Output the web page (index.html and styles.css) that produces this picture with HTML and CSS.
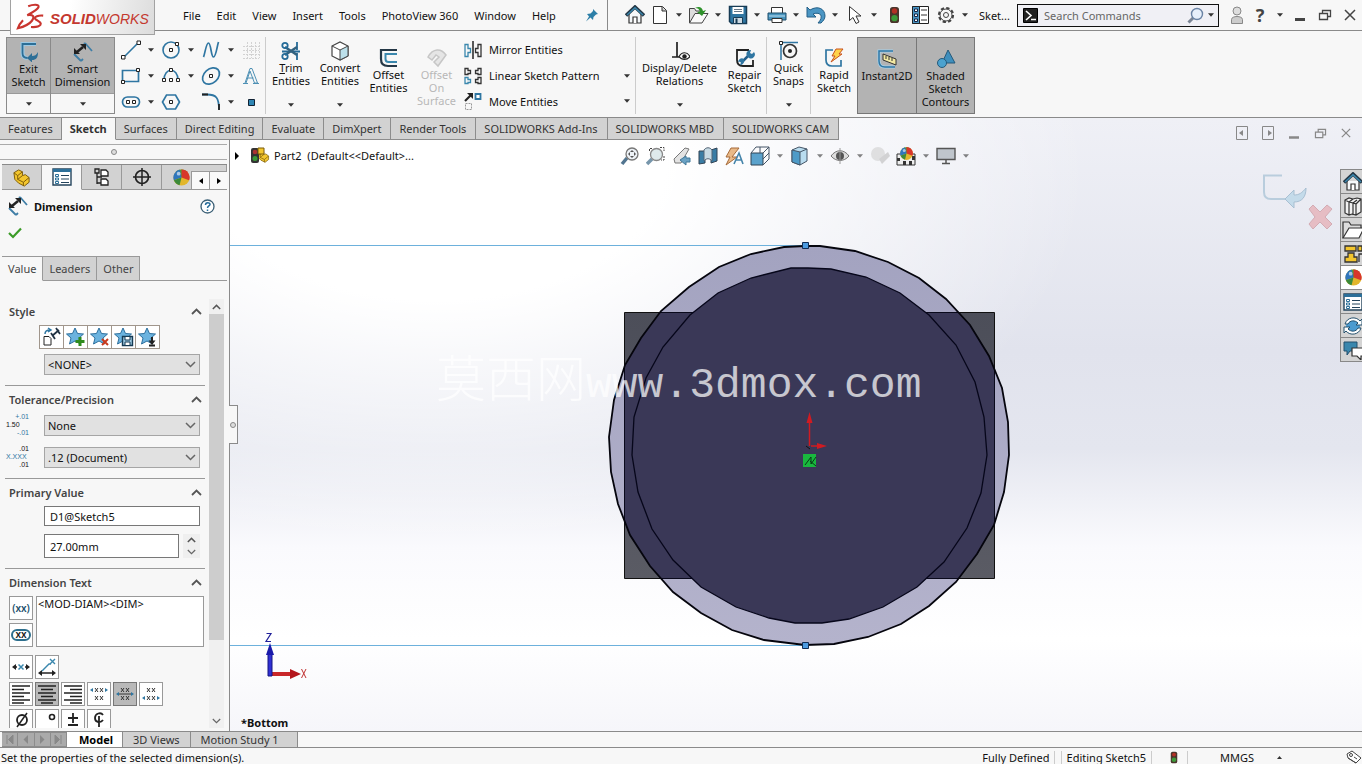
FILE: index.html
```html
<!DOCTYPE html>
<html lang="en">
<head>
<meta charset="utf-8">
<title>SOLIDWORKS</title>
<link rel="stylesheet" href="styles.css">
</head>
<body>
<svg class="sprite" aria-hidden="true">
  <symbol id="caret" viewBox="0 0 7 4"><path d="M0 0h7L3.500 4z" fill="#333"/></symbol>
  <symbol id="up" viewBox="0 0 11 7"><path d="M1 6l4.500-4.500L10 6" fill="none" stroke="#555" stroke-width="1.800"/></symbol>
  <symbol id="down" viewBox="0 0 11 7"><path d="M1 1l4.500 4.500L10 1" fill="none" stroke="#666" stroke-width="1.500"/></symbol>
  <symbol id="dim" viewBox="0 0 20 20"><path d="M1 12l7 7M8 19l2-2M12 1l7 8M12 1l-1 1" fill="none" stroke="#3f7ea6" stroke-width="1.800"/><path d="M4 10l6-5" stroke="#222" stroke-width="2.500"/><path d="M1 12V6l6 6zM13 2v6L7 2z" fill="#222"/></symbol>
  <symbol id="star" viewBox="0 0 20 20"><path d="M9 1l2.500 5.500 6 .5-4.500 4 1.500 6L9 14l-5.500 3L5 11 .5 7l6-.5z" fill="#6bb3df" stroke="#2d6f9d"/></symbol>
  <symbol id="house" viewBox="0 0 20 20"><path d="M4 9v9h12V9" fill="#f5f8fa" stroke="#333" stroke-width="1.200"/><path d="M1 10.500L10 2l9 8.500" fill="none" stroke="#243746" stroke-width="3.500"/><path d="M2 10L10 2.800 18 10" fill="none" stroke="#3a87ad" stroke-width="1.400"/><path d="M8 18v-6h4v6" fill="#fff" stroke="#333" stroke-width="1.200"/></symbol>
  <symbol id="list" viewBox="0 0 20 20"><path d="M1 2h18v16H1z" fill="#fff" stroke="#24445c" stroke-width="1.400"/><path d="M1 2h18v3H1z" fill="#2d7099"/><path d="M9 8.500h8M9 12h8M9 15.500h8" stroke="#24445c"/><path d="M3.500 7.500h3v2h-3zM3.500 11h3v2h-3zM3.500 14.500h3v2h-3z" fill="#fff" stroke="#2d7099"/></symbol>
  <symbol id="ball" viewBox="0 0 20 20"><circle cx="10" cy="10" r="8.500" fill="#e2b62b"/><path d="M10 10L4 4A8.500 8.500 0 0 1 16 4z" fill="#4f9b39"/><path d="M10 10V1.500A8.500 8.500 0 0 1 18 13z" fill="#d8362b"/><path d="M10 10L2 13A8.500 8.500 0 0 1 8 1.700z" fill="#2f76bd"/><path d="M10 10l-8 3a8.500 8.500 0 0 0 6 5.200z" fill="#3b8a3a"/><circle cx="7" cy="6" r="2" fill="#fff" opacity=".6"/></symbol>
  <symbol id="restore" viewBox="0 0 14 12"><path d="M4.500 4.500v-3h8v6h-3M1.500 4.500h8v6h-8z" fill="none" stroke="currentColor" stroke-width="1.300"/></symbol>
  <symbol id="close" viewBox="0 0 12 12"><path d="M1 1l10 10M11 1L1 11" stroke="currentColor" stroke-width="1.500"/></symbol>
  <symbol id="light" viewBox="0 0 12 20"><rect x="1" y="1" width="10" height="18" rx="3" fill="#4a352b"/><circle cx="6" cy="5.500" r="3" fill="#b43025"/><circle cx="6" cy="13.500" r="3.500" fill="#3d9a39"/></symbol>
  <symbol id="part" viewBox="0 0 20 20"><path d="M2 5l5-3 4 2v4l3-1 4 3v5l-5 4-6-3-4-4z" fill="#f3c62e" stroke="#7b5b08"/><path d="M2 5l4 3 5-4M6 8v4l6 3 6-5M12 15v4M6 12l5-4" fill="none" stroke="#7b5b08"/></symbol>
</svg>

<header class="titlebar">
  <div class="logo">
    <svg class="mark" viewBox="14 0 32 30"><path d="M27 3.500c5-2 12-2.500 11 1-1 3-7 6-12 8.500 7-1 8 2 5 6-3 4-9 6.500-15 8 1-3 3-6 5.500-8.500" fill="none" stroke="#c9352f" stroke-width="2.300"/><path d="M43 13.500c-5-.5-10 1-8.500 3.500C36 19 42 20.500 40 23.500c-1.500 2-5 2.500-10 2.200" fill="none" stroke="#c9352f" stroke-width="2.300"/></svg>
    <span class="wordmark"><b>SOLID</b>WORKS</span>
  </div>
  <div class="menuside">
    <nav class="menus"><button>File</button><button>Edit</button><button>View</button><button>Insert</button><button>Tools</button><button>PhotoView 360</button><button>Window</button><button>Help</button></nav>
    <button class="pin" aria-label="Pin menu"><svg width="14" height="14" viewBox="0 0 14 14"><path d="M8 1l5 5-2 .5-2.500 2.500-.5 3L5.500 9.500 1 13.500 4 8.500 2 6l3.500-.5L8 3z" fill="#2d7fa8"/></svg></button>
  </div>
  <div class="quick">
    <button class="q" aria-label="Home"><svg width="20" height="20"><use href="#house"/></svg></button>
    <button class="q" aria-label="New"><svg width="16" height="20" viewBox="0 0 16 20"><path d="M1.500 1.500h9l4 4v13h-13z" fill="#fff" stroke="#333"/><path d="M10 2v4h4" fill="#ccc" stroke="#333"/></svg></button><button class="c" aria-label="New options"><svg><use href="#caret"/></svg></button>
    <button class="q" aria-label="Open"><svg width="21" height="20" viewBox="0 0 21 20"><path d="M1.500 18V3.500h5L8 6h6v3" fill="#ddd" stroke="#444"/><path d="M1.500 18L7 8.500h13L14 18z" fill="#fafafa" stroke="#444"/><path d="M7 3c4-2 7-1 8 3l3-1-4 6-5-4 3-.5C11 4 10 3 7 3z" fill="#2f922b"/></svg></button><button class="c" aria-label="Open options"><svg><use href="#caret"/></svg></button>
    <button class="q" aria-label="Save"><svg width="20" height="20" viewBox="0 0 20 20"><path d="M1.500 1.500h17v17h-15l-2-2z" fill="#2f76a2" stroke="#173b54" stroke-width="1.500"/><path d="M4.500 2h11v7h-11z" fill="#fff"/><path d="M6 4.500h8M6 6.500h8" stroke="#678"/><path d="M5.500 12.500h9v6h-9z" fill="#ccd9e2" stroke="#173b54"/><path d="M7.500 13.500h2v5h-2z" fill="#173b54"/></svg></button><button class="c" aria-label="Save options"><svg><use href="#caret"/></svg></button>
    <button class="q" aria-label="Print"><svg width="20" height="20" viewBox="0 0 20 20"><path d="M4.500 8V2.500h11V8" fill="#fff" stroke="#333"/><path d="M1 8h18v7H1z" fill="#4b96bf" stroke="#1c4c6a"/><path d="M2 11h16" stroke="#bfe0f2"/><path d="M5 13.500h10v4H5z" fill="#fff" stroke="#333"/></svg></button><button class="c" aria-label="Print options"><svg><use href="#caret"/></svg></button>
    <button class="q" aria-label="Undo"><svg width="20" height="18" viewBox="0 0 20 18"><path d="M1 1l3 3c8-5 15-1 15 6 0 3-2 5-4 7h-3c6-6 3-12-5-9l3 3H1z" fill="#4b96c4" stroke="#245f86"/></svg></button><button class="c" aria-label="Undo options"><svg><use href="#caret"/></svg></button>
    <button class="q" aria-label="Select"><svg width="14" height="20" viewBox="0 0 14 20"><path d="M1.500 1.500v14l3.500-3 3 6 3-1.500-3-6h5z" fill="#fff" stroke="#333"/></svg></button><button class="c" aria-label="Select options"><svg><use href="#caret"/></svg></button>
    <button class="q wide" aria-label="Rebuild"><svg width="11" height="18"><use href="#light"/></svg></button>
    <button class="q wide" aria-label="File properties"><svg width="17" height="18" viewBox="0 0 17 18"><path d="M.5.500h16v17H.5z" fill="#fff" stroke="#222"/><path d="M.5.500h7v17h-7z" fill="#4b96c4" stroke="#222"/><path d="M2.500 3h3v2.500h-3zM2.500 8h3v2.500h-3zM2.500 13h3v2.500h-3z" fill="#fff" stroke="#124"/><path d="M9 4h6M9 9h6M9 14h6" stroke="#333"/></svg></button>
    <button class="q" aria-label="Options"><svg width="18" height="18" viewBox="0 0 18 18"><circle cx="9" cy="9" r="7" fill="none" stroke="#444" stroke-width="2.200" stroke-dasharray="3.300 2.200"/><circle cx="9" cy="9" r="6" fill="#f7f7f7" stroke="#444"/><circle cx="9" cy="9" r="2.500" fill="none" stroke="#444"/></svg></button><button class="c" aria-label="Options menu"><svg><use href="#caret"/></svg></button>
    <span class="doc">Sket...</span>
  </div>
  <div class="search">
    <svg width="15" height="15" viewBox="0 0 15 15"><path d="M.5.500h14v14H.5z" fill="#222" stroke="#000"/><path d="M3 3l5 4.500L3 12M8 11.500h5" fill="none" stroke="#fff" stroke-width="1.600"/></svg>
    <input type="text" placeholder="Search Commands" aria-label="Search Commands">
    <svg width="17" height="17" viewBox="0 0 17 17"><path d="M7 10l-5.500 5.500" stroke="#7a8494" stroke-width="3"/><circle cx="10" cy="7" r="5.500" fill="#e7effa" stroke="#6a83a4" stroke-width="1.400"/></svg>
    <button class="c" aria-label="Search options"><svg><use href="#caret"/></svg></button>
  </div>
  <div class="winctl">
    <button class="w1" aria-label="Account"><svg width="14" height="19" viewBox="0 0 14 19"><path d="M1.500 17.500v-4c0-4 11-4 11 0v4z" fill="#ccc" stroke="#888"/><circle cx="7" cy="5" r="4" fill="#ddd" stroke="#888"/></svg></button>
    <button class="help">?</button><button class="c" aria-label="Help options"><svg><use href="#caret"/></svg></button>
    <button class="w2" aria-label="Minimize"><svg width="10" height="12" viewBox="0 0 10 12"><path d="M0 10.500h10" stroke="currentColor" stroke-width="3"/></svg></button>
    <button class="w2" aria-label="Restore"><svg width="14" height="12"><use href="#restore"/></svg></button>
    <button class="w2" aria-label="Close"><svg width="12" height="12"><use href="#close"/></svg></button>
  </div>
</header>

<section class="ribbon">
  <div class="split on exit"><button><svg width="20" height="20" viewBox="0 0 20 20"><path d="M17 2H3.500v9c0 4 2 5 5 5" fill="none" stroke="#9cc9e4" stroke-width="4"/><path d="M17 2H3.500v9c0 4 2 5 5 5" fill="none" stroke="#2d6f97" stroke-width="1.800"/><path d="M8 16l5-5v3c3 0 4-1 6-4 0 6-2 8-6 8v2.500z" fill="#2d6f97"/></svg><span>Exit<br>Sketch</span></button><button class="drop" aria-label="Exit Sketch options"><svg><use href="#caret"/></svg></button></div>
  <div class="split on smart"><button><svg width="20" height="20"><use href="#dim"/></svg><span>Smart<br>Dimension</span></button><button class="drop" aria-label="Dimension options"><svg><use href="#caret"/></svg></button></div>
  <div class="sketchtools">
    <button class="s" aria-label="Line"><svg width="20" height="20" viewBox="0 0 20 20"><path d="M3 17L17 3" stroke="#2f76a2" stroke-width="1.600"/><path d="M.5 15.500h3.500V19H.500zM16 1h3.500v3.500H16z" fill="#fff" stroke="#222"/></svg></button><button class="c" aria-label="Line options"><svg><use href="#caret"/></svg></button>
    <button class="s" aria-label="Circle"><svg width="20" height="20" viewBox="0 0 20 20"><circle cx="10" cy="10" r="8" fill="none" stroke="#2f76a2" stroke-width="1.600"/><path d="M8.500 8.500h3v3h-3zM14.500 2.500h3v3h-3z" fill="#fff" stroke="#222"/></svg></button><button class="c" aria-label="Circle options"><svg><use href="#caret"/></svg></button>
    <button class="s" aria-label="Spline"><svg width="20" height="20" viewBox="0 0 20 20"><path d="M2.500 17C4 14 5 3 7.500 3S10 17 12.500 17 16 6 17.500 2" fill="none" stroke="#2f76a2" stroke-width="1.700"/></svg></button><button class="c" aria-label="Spline options"><svg><use href="#caret"/></svg></button>
    <button class="s" aria-label="Sketch grid"><svg width="18" height="18" viewBox="0 0 18 18"><path d="M5.500 1v16M9.500 1v16M13.500 1v16M17.500 1v16M1 5.500h16M1 9.500h16M1 13.500h16M1 17.500h16" stroke="#d2d2d2" stroke-dasharray="2 1"/></svg></button>
    <button class="s" aria-label="Rectangle"><svg width="20" height="20" viewBox="0 0 20 20"><path d="M1.500 4.500h16v11h-16z" fill="none" stroke="#2f76a2" stroke-width="1.700"/><path d="M.5 14.500h3v3h-3zM15.500 2.500h3v3h-3z" fill="#fff" stroke="#222"/></svg></button><button class="c" aria-label="Rectangle options"><svg><use href="#caret"/></svg></button>
    <button class="s" aria-label="Arc"><svg width="20" height="20" viewBox="0 0 20 20"><path d="M3 14C3 1 17 1 17 14" fill="none" stroke="#2f76a2" stroke-width="1.600"/><path d="M1.500 12.500h3v3h-3zM15.500 12.500h3v3h-3zM8.500 2.500h3v3h-3zM8.500 12.500h3v3h-3z" fill="#fff" stroke="#222"/></svg></button><button class="c" aria-label="Arc options"><svg><use href="#caret"/></svg></button>
    <button class="s" aria-label="Ellipse"><svg width="20" height="20" viewBox="0 0 20 20"><ellipse cx="10" cy="10" rx="9.500" ry="7" transform="rotate(-42 10 10)" fill="none" stroke="#2f76a2" stroke-width="1.700"/><path d="M8.500 8.500h3v3h-3z" fill="#fff" stroke="#222"/></svg></button><button class="c" aria-label="Ellipse options"><svg><use href="#caret"/></svg></button>
    <button class="s" aria-label="Text"><svg width="18" height="18" viewBox="0 0 18 18"><path d="M1 16.500h5M11 16.500h6M3 16L8 1.500h2L15.500 16h-3L8 4 4 16M5.500 11h6" fill="none" stroke="#4f91b5"/></svg></button>
    <button class="s" aria-label="Slot"><svg width="20" height="20" viewBox="0 0 20 20"><rect x="1.500" y="5" width="17" height="10" rx="5" fill="none" stroke="#2f76a2" stroke-width="1.700"/><path d="M5.500 8.500h3v3h-3zM11.500 8.500h3v3h-3z" fill="#fff" stroke="#222"/></svg></button><button class="c" aria-label="Slot options"><svg><use href="#caret"/></svg></button>
    <button class="s" aria-label="Polygon"><svg width="20" height="20" viewBox="0 0 20 20"><path d="M5.500 3h9l4 7-4 7h-9l-4-7z" fill="none" stroke="#2f76a2" stroke-width="1.700"/><path d="M8.500 8.500h3v3h-3z" fill="#fff" stroke="#222"/></svg></button><span></span>
    <button class="s" aria-label="Fillet"><svg width="20" height="20" viewBox="0 0 20 20"><path d="M1 2.500h5c9 0 12 3 12 15" fill="none" stroke="#2f76a2" stroke-width="1.800"/><path d="M1 2.500h6M18 12v6" stroke="#222" stroke-width="1.800"/></svg></button><button class="c" aria-label="Fillet options"><svg><use href="#caret"/></svg></button>
    <button class="s" aria-label="Point"><svg width="7" height="7" viewBox="0 0 7 7"><path d="M.5.500h6v6h-6z" fill="#2f86b4" stroke="#123"/></svg></button>
  </div>
  <div class="tool trim"><button><svg width="20" height="20" viewBox="0 0 20 20"><path d="M1 10.500h18M16 1v8M16 12v7" stroke="#256b98" stroke-width="1.800"/><path d="M4 6l12 8M4 14l12-8" stroke="#33627f" stroke-width="2.500"/><circle cx="4" cy="4.500" r="2.700" fill="none" stroke="#256b98" stroke-width="1.800"/><circle cx="4" cy="15.500" r="2.700" fill="none" stroke="#256b98" stroke-width="1.800"/></svg><span><u>T</u>rim<br>Entities</span></button><button class="drop" aria-label="Trim options"><svg><use href="#caret"/></svg></button></div>
  <div class="tool conv"><button><svg width="20" height="20" viewBox="0 0 20 20"><path d="M2 5l8-4 8 4v10l-8 4-8-4z" fill="#fff" stroke="#444" stroke-width="1.200"/><path d="M10 9l8-4v10l-8 4z" fill="#bce0ea" stroke="#444"/><path d="M2 5l8 4" stroke="#444"/></svg><span>Convert<br>Entities</span></button><button class="drop" aria-label="Convert options"><svg><use href="#caret"/></svg></button></div>
  <div class="tool low offs"><button><svg width="20" height="20" viewBox="0 0 20 20"><path d="M18 2H2v9c0 5 2 7 7 7h9" fill="none" stroke="#243746" stroke-width="2.200"/><path d="M18 6H6.500v5c0 2 1 3 3 3H18" fill="none" stroke="#3a87ad" stroke-width="2"/></svg><span>Offset<br>Entities</span></button></div>
  <div class="tool low surf"><button disabled><svg width="20" height="20" viewBox="0 0 20 20"><path d="M1 9c5-9 13-9 18-2l-8 11-4-4 5-5-3-2-4 5z" fill="#e5e5e5" stroke="#c6c6c6" stroke-width="1.500"/></svg><span>Offset<br>On<br>Surface</span></button></div>
  <div class="rows">
    <div class="row"><button><svg width="18" height="18" viewBox="0 0 18 18"><path d="M9 0v18" stroke="#222" stroke-width="1.500"/><path d="M1 3.500h3v4h2.500v4H4v4H1z" fill="none" stroke="#3a87ad" stroke-width="1.300"/><path d="M17 3.500h-3v4h-2.500v4H14v4h3z" fill="none" stroke="#333" stroke-width="1.300"/></svg>Mirror Entities</button></div>
    <div class="row"><button><svg width="18" height="18" viewBox="0 0 18 18"><path d="M1 1.500h3v2h2.500v3H4v1H1zM17 1.500h-3v2h-2.500v3H14v1h3zM17 10.500h-3v2h-2.500v3H14v1h3z" fill="none" stroke="#333" stroke-width="1.300"/><path d="M1 10.500h3v2h2.500v3H4v1H1z" fill="none" stroke="#3a87ad" stroke-width="1.300"/></svg>Linear Sketch Pattern</button><button class="c" aria-label="Pattern options"><svg><use href="#caret"/></svg></button></div>
    <div class="row"><button><svg width="18" height="18" viewBox="0 0 18 18"><path d="M1 9l6-6" stroke="#222" stroke-width="2.200"/><path d="M3 1h6v6z" fill="#222"/><path d="M11.500 2h5v5h-5z" fill="#fff" stroke="#2f76a2" stroke-width="1.800"/><path d="M1.500 11.500h6v6h-6z" fill="none" stroke="#999" stroke-dasharray="2 1"/></svg>Move Entities</button><button class="c" aria-label="Move options"><svg><use href="#caret"/></svg></button></div>
  </div>
  <div class="tool disp"><button><svg width="20" height="20" viewBox="0 0 20 20"><path d="M7 1v15M2 16h8" stroke="#222" stroke-width="1.700"/><path d="M9 15.500c3-5 8-5 11 0-3 4-8 4-11 0z" fill="#f7f7f7" stroke="#222" stroke-width="1.200"/><circle cx="14.500" cy="15.500" r="2.200" fill="#222"/></svg><span>Display/Delete<br>Relations</span></button><button class="drop" aria-label="Relations options"><svg><use href="#caret"/></svg></button></div>
  <div class="tool low repair"><button><svg width="20" height="20" viewBox="0 0 20 20"><path d="M14 2H2v10c0 4 2 6 6 6h10v-6" fill="none" stroke="#222" stroke-width="1.800"/><path d="M7 14l7-7" stroke="#225f8c" stroke-width="2.500"/><path d="M12 8a4 4 0 0 1 4-6l-1 3 2 1 2-2a4 4 0 0 1-5 6zM9 12a4 4 0 0 1-4 5l1-2.500-2-1-1 1a4 4 0 0 1 5-4z" fill="#2f76a2"/></svg><span>Repair<br>Sketch</span></button></div>
  <div class="tool snaps"><button><svg width="20" height="20" viewBox="0 0 20 20"><path d="M1 1.500h18M2 1v18" stroke="#2f76a2" stroke-width="1.500"/><path d="M.5.500h3v3h-3z" fill="#fff" stroke="#222"/><circle cx="11" cy="10" r="6.500" fill="none" stroke="#333" stroke-width="1.700"/><circle cx="11" cy="10" r="2" fill="#222"/></svg><span>Quick<br>Snaps</span></button><button class="drop" aria-label="Snap options"><svg><use href="#caret"/></svg></button></div>
  <div class="tool low rapid"><button><svg width="20" height="20" viewBox="0 0 20 20"><path d="M9 2H2v10c0 4 2 6 6 6h9v-6" fill="none" stroke="#2f76a2" stroke-width="1.700"/><path d="M12 1h7l-4 5h3L7 14l4-6H8z" fill="#ffd34a" stroke="#c8501c"/></svg><span>Rapid<br>Sketch</span></button></div>
  <div class="tool low on inst"><button><svg width="20" height="20" viewBox="0 0 20 20"><path d="M16 2H2v10c0 4 2 6 6 6h10" fill="none" stroke="#a6d2ec" stroke-width="3"/><path d="M16 2H2v10c0 4 2 6 6 6h10" fill="none" stroke="#2f76a2" stroke-width="1.500"/><path d="M6 5l13 5v6L6 11z" fill="#f3e9a2" stroke="#333"/><path d="M9 7v3M12 8v3M15 9v3" stroke="#333"/></svg><span>Instant2D</span></button></div>
  <div class="tool low on shade"><button><svg width="20" height="20" viewBox="0 0 20 20"><path d="M12 1l7 13H6z" fill="#3f8fbd" stroke="#25597a"/><circle cx="6" cy="14" r="4.500" fill="#4ba2cf" stroke="#25597a"/></svg><span>Shaded<br>Sketch<br>Contours</span></button></div>
</section>

<main class="work">
  <div class="tabline">
    <nav class="cmdtabs"><button>Features</button><button class="active">Sketch</button><button>Surfaces</button><button>Direct Editing</button><button>Evaluate</button><button>DimXpert</button><button>Render Tools</button><button>SOLIDWORKS Add-Ins</button><button>SOLIDWORKS MBD</button><button>SOLIDWORKS CAM</button></nav>
    <div class="docctl">
      <button aria-label="Pane left"><svg width="12" height="14" viewBox="0 0 12 14"><path d="M.5.500h11v13H.5z" fill="none" stroke="currentColor"/><path d="M7 4v6L3 7z" fill="currentColor"/></svg></button>
      <button aria-label="Pane right"><svg width="12" height="14" viewBox="0 0 12 14"><path d="M.5.500h11v13H.5z" fill="none" stroke="currentColor"/><path d="M6 4v6l4-3z" fill="currentColor"/></svg></button>
      <button aria-label="Minimize document"><svg width="10" height="12" viewBox="0 0 10 12"><path d="M0 10.500h10" stroke="currentColor" stroke-width="2.500"/></svg></button>
      <button aria-label="Restore document"><svg width="13" height="11"><use href="#restore"/></svg></button>
      <button aria-label="Close document"><svg width="10" height="10"><use href="#close"/></svg></button>
    </div>
  </div>
  <div class="split-area">
    <aside class="panel">
      <div class="grip"><i></i></div>
      <nav class="icontabs">
        <button aria-label="Feature tree"><svg width="19" height="19"><use href="#part"/></svg></button>
        <button class="active" aria-label="Properties"><svg width="20" height="20"><use href="#list"/></svg></button>
        <button aria-label="Configurations"><svg width="18" height="20" viewBox="0 0 18 20"><path d="M2 2h4v4H2zM4 6v11M4 10h5M4 16h5" fill="none" stroke="#222" stroke-width="1.300"/><path d="M8 3h5l2 2v4H8zM8 12h5l2 2v4H8z" fill="#fff" stroke="#222" stroke-width="1.300"/></svg></button>
        <button aria-label="DimXpert manager"><svg width="20" height="20" viewBox="0 0 20 20"><circle cx="10" cy="10" r="6.500" fill="none" stroke="#222" stroke-width="1.700"/><path d="M10 1v18M1 10h18" stroke="#222" stroke-width="1.500"/></svg></button>
        <button class="last" aria-label="Display manager"><svg width="19" height="19"><use href="#ball"/></svg></button>
        <span class="tabscroll"><button aria-label="Scroll left"><svg width="4" height="6" viewBox="0 0 4 6"><path d="M4 0v6L0 3z"/></svg></button><button aria-label="Scroll right"><svg width="4" height="6" viewBox="0 0 4 6"><path d="M0 0v6l4-3z"/></svg></button></span>
      </nav>
      <div class="phead"><svg width="20" height="20"><use href="#dim"/></svg><h2>Dimension</h2><button aria-label="Help"><svg width="15" height="15" viewBox="0 0 15 15"><circle cx="7.500" cy="7.500" r="6.500" fill="#fff" stroke="#3c6076" stroke-width="1.300"/><path d="M5.500 6c0-3 4.500-3 4.500-.5 0 1.500-2.500 1.500-2.500 3.500M7.500 10.500v1.500" fill="none" stroke="#276d9b" stroke-width="1.500"/></svg></button></div>
      <button class="ok" aria-label="OK"><svg width="14" height="12" viewBox="0 0 14 12"><path d="M1 6l4 4 8-8.500" fill="none" stroke="#3b9b27" stroke-width="2.200"/></svg></button>
      <nav class="ptabs"><button class="active">Value</button><button>Leaders</button><button>Other</button></nav>
      <div class="scrollwrap">
        <div class="props">
          <section>
            <h3>Style<svg width="11" height="7"><use href="#up"/></svg></h3>
            <div class="stylebtns">
              <button aria-label="Default attributes"><svg width="20" height="20" viewBox="0 0 20 20"><path d="M2 9.500h5l2 2V18H2z" fill="#fff" stroke="#222"/><path d="M3 7c0-3 2-4 5-4M6 1l3 2-3 2" fill="none" stroke="#2f76a2" stroke-width="1.500"/><path d="M10 9l7-6M9 6l4 6M14 1l4 6" stroke="#234" stroke-width="1.800"/></svg></button>
              <button aria-label="Add style"><svg width="20" height="20" viewBox="0 0 20 20"><use href="#star"/><path d="M14 10v9M9.500 14.500h9" stroke="#2f8b1d" stroke-width="3"/></svg></button>
              <button aria-label="Delete style"><svg width="20" height="20" viewBox="0 0 20 20"><use href="#star"/><path d="M12 12l6 6M18 12l-6 6" stroke="#c83a1d" stroke-width="2"/></svg></button>
              <button aria-label="Save style"><svg width="20" height="20" viewBox="0 0 20 20"><use href="#star"/><path d="M8.500 9.500h10v9h-10z" fill="#9cc7df" stroke="#173b54" stroke-width="1.400"/><path d="M11 10v3h5v-3M11 18v-3h5v3" fill="#fff" stroke="#173b54"/></svg></button>
              <button aria-label="Load style"><svg width="20" height="20" viewBox="0 0 20 20"><use href="#star"/><path d="M14 10v5M11 18.500h6" stroke="#222" stroke-width="2"/><path d="M10.500 13.500h7L14 18z" fill="#222"/></svg></button>
            </div>
            <div class="field"><span class="sel"><select aria-label="Style"><option>&lt;NONE&gt;</option></select><svg width="11" height="7"><use href="#down"/></svg></span></div>
          </section>
          <section>
            <h3>Tolerance/Precision<svg width="11" height="7"><use href="#up"/></svg></h3>
            <div class="field"><label for="tol" class="tolicon"><span class="b">+.01</span><span class="m">1.50</span><span class="b">-.01</span></label><span class="sel"><select id="tol"><option>None</option></select><svg width="11" height="7"><use href="#down"/></svg></span></div>
            <div class="field second"><label for="prec" class="tolicon"><span>.01</span><span class="m b">X.XXX</span><span>.01</span></label><span class="sel"><select id="prec"><option>.12 (Document)</option></select><svg width="11" height="7"><use href="#down"/></svg></span></div>
          </section>
          <section class="primary">
            <h3>Primary Value<svg width="11" height="7"><use href="#up"/></svg></h3>
            <div class="field"><input type="text" value="D1@Sketch5" aria-label="Dimension name"></div>
            <div class="field third"><input type="text" value="27.00mm" aria-label="Dimension value"><span class="spin"><button aria-label="Increase"><svg width="9" height="6"><use href="#up"/></svg></button><button aria-label="Decrease"><svg width="9" height="6"><use href="#down"/></svg></button></span></div>
          </section>
          <section>
            <h3>Dimension Text<svg width="11" height="7"><use href="#up"/></svg></h3>
            <div class="textrow"><div class="stack"><button class="k"><span class="xx">(xx)</span></button><button class="k"><span class="xx pill">xx</span></button></div><textarea aria-label="Dimension text">&lt;MOD-DIAM&gt;&lt;DIM&gt;</textarea></div>
            <div class="krow"><button class="k" aria-label="Center dimension"><svg width="20" height="20" viewBox="0 0 20 20"><path d="M1 10l4-3v6zM19 10l-4-3v6z" fill="#222"/><path d="M4 10h2M14 10h2" stroke="#222" stroke-width="1.500"/><path d="M7.500 7.500l5 5M12.500 7.500l-5 5" stroke="#3a87ad" stroke-width="1.500"/></svg></button><button class="k" aria-label="Offset text"><svg width="20" height="20" viewBox="0 0 20 20"><path d="M1 16l4-3v6zM19 16l-4-3v6z" fill="#222"/><path d="M3 16h14" stroke="#222" stroke-width="1.500"/><path d="M5 14l7-7h2M13 2l5 5M18 2l-5 5" fill="none" stroke="#3a87ad" stroke-width="1.400"/></svg></button></div>
            <div class="krow near">
              <button class="k" aria-label="Align left"><svg width="20" height="20" viewBox="0 0 20 20"><path d="M1 2h18M1 5.500h12M1 9h18M1 12.500h12M1 16h18M1 19h12" stroke="#222" stroke-width="1.500"/></svg></button>
              <button class="k sel-on" aria-label="Align center"><svg width="20" height="20" viewBox="0 0 20 20"><path d="M1 2h18M4 5.500h12M1 9h18M4 12.500h12M1 16h18M4 19h12" stroke="#222" stroke-width="1.500"/></svg></button>
              <button class="k" aria-label="Align right"><svg width="20" height="20" viewBox="0 0 20 20"><path d="M1 2h18M7 5.500h12M1 9h18M7 12.500h12M1 16h18M7 19h12" stroke="#222" stroke-width="1.500"/></svg></button>
              <button class="k" aria-label="Align top"><svg width="20" height="20" viewBox="0 0 20 20"><path d="M1 6l3-2v4zM19 6l-3-2v4z" fill="#2f76a2"/><path d="M6 4l3 4M9 4L6 8M11 4l3 4M14 4l-3 4M6 12l3 4M9 12l-3 4M11 12l3 4M14 12l-3 4" stroke="#333"/></svg></button>
              <button class="k sel-on" aria-label="Align middle"><svg width="20" height="20" viewBox="0 0 20 20"><path d="M1 10l3-2v4zM19 10l-3-2v4z" fill="#2f76a2"/><path d="M6 4l3 4M9 4L6 8M11 4l3 4M14 4l-3 4M6 12l3 4M9 12l-3 4M11 12l3 4M14 12l-3 4M4 10h12" stroke="#333"/></svg></button>
              <button class="k" aria-label="Align bottom"><svg width="20" height="20" viewBox="0 0 20 20"><path d="M1 14l3-2v4zM19 14l-3-2v4z" fill="#2f76a2"/><path d="M6 4l3 4M9 4L6 8M11 4l3 4M14 4l-3 4M6 12l3 4M9 12l-3 4M11 12l3 4M14 12l-3 4" stroke="#333"/></svg></button>
            </div>
            <div class="krow near">
              <button class="k" aria-label="Diameter"><svg width="20" height="20" viewBox="0 0 20 20"><circle cx="11" cy="9" r="5" fill="none" stroke="#222" stroke-width="1.800"/><path d="M6 16L16 2" stroke="#222" stroke-width="1.500"/></svg></button>
              <button class="k" aria-label="Degree"><svg width="20" height="20" viewBox="0 0 20 20"><circle cx="15" cy="6" r="2.500" fill="none" stroke="#222" stroke-width="1.600"/></svg></button>
              <button class="k" aria-label="Plus minus"><svg width="20" height="20" viewBox="0 0 20 20"><path d="M10 2v10M5 7h10M5 14h10" stroke="#222" stroke-width="1.800"/></svg></button>
              <button class="k" aria-label="Centerline"><svg width="20" height="20" viewBox="0 0 20 20"><path d="M14 4c-2-3-8-2-8 3s6 5 8 2M10 5v11" fill="none" stroke="#222" stroke-width="1.800"/></svg></button>
            </div>
          </section>
        </div>
        <div class="scrollbar"><button aria-label="Scroll up"><svg width="9" height="6"><use href="#up"/></svg></button><span class="thumb"></span><button aria-label="Scroll down"><svg width="9" height="6"><use href="#down"/></svg></button></div>
      </div>
    </aside>

    <section class="view">
      <svg class="scene" viewBox="230 140 1132 591" preserveAspectRatio="xMinYMin meet">
        <defs>
          <linearGradient id="ring" x1="0" y1="0" x2="0" y2="1"><stop offset="0" stop-color="#a3a3c0"/><stop offset="1" stop-color="#b4b3cc"/></linearGradient>
          <linearGradient id="box" x1="0" y1="0" x2="0" y2="1"><stop offset="0" stop-color="#4c4e59"/><stop offset="1" stop-color="#5a5b64"/></linearGradient>
          <clipPath id="outer"><path id="outline" d="M805 246l15 0 35 5 33 11 31 16 27 21 24 26 19 31 13 32 6 34 1 33-5 37-10 33-17 29-21 28-27 24-28 18-33 13-34 7-29 1-41-5-32-10-31-17-28-21-23-26-20-31-12-31-7-32-2-35 5-37 11-35 16-27 20-27 28-24 30-20 32-13 33-7z"/></clipPath>
        </defs>
        <path d="M230 245.500h575M230 645.500h575" stroke="#6db1dc"/>
        <use href="#outline" fill="url(#ring)"/>
        <path d="M624.500 312.500h370v266h-370z" fill="url(#box)" stroke="#111"/>
        <path d="M624.500 312.500h370v266h-370z" fill="#3a3857" stroke="#0a0a1c" clip-path="url(#outer)"/>
        <path d="M808 268l23 1 35 8 34 16 29 22 27 30 19 37 9 35 3 38-6 38-14 35-23 34-27 25-34 20-34 12-27 4h-27l-26-5-33-11-35-20-28-27-21-31-14-37-6-37 2-38 12-39 17-31 27-32 28-22 33-15 40-10z" fill="#3a3857" stroke="#06061a" stroke-width="1.300"/>
        <use href="#outline" fill="none" stroke="#05050d" stroke-width="1.800"/>
        <path d="M802.500 242.500h6v6h-6zM802.500 642.500h6v6h-6z" fill="#4c9be0" stroke="#102d55"/>
        <text class="wm" x="436" y="397"><tspan class="cjk">莫西网</tspan><tspan x="586">www.3dmox.com</tspan></text>
        <path d="M809.500 446v-24M811 446h8" stroke="#d01b22" stroke-width="1.500"/><path d="M806.500 423l3-11 3 11zM817 443l10 3-10 3z" fill="#d01b22"/><path d="M806 446l4 3" stroke="#111"/>
        <path d="M803 454h13v13h-13z" fill="#19b83e"/><path d="M805 465l6-8v7l5-7M810 461l6 5" fill="none" stroke="#073d16"/>
        <path d="M268 676v-4h22v4z" fill="#c9272a"/><path d="M268 676v-24h4v24z" fill="#3030d4" stroke="#151580"/><path d="M266 655l4-12 4 12z" fill="#1b1baa"/><path d="M290 669l11 5-11 5z" fill="#b4161c"/>
        <path d="M266.500 633.500h4.500l-5 8h5" fill="none" stroke="#20209a" stroke-width="1.200"/><path d="M301.500 669l4.500 9M306 669l-4.500 9" stroke="#c03030"/>
        <path d="M1282 175.500h-18V192c0 5 3 7 7 7h14" fill="none" stroke="#b9cddd" stroke-width="2"/><path d="M1285 199l9-9v5c5 0 8-2 12-7 0 9-4 14-12 14v6z" fill="#c4dbea" stroke="#a8bfd2"/>
        <path d="M1309 209l4-4 7 7 7-7 5 4-7 8 7 7-5 5-7-7-7 7-4-5 6-7z" fill="#e6bdc4" stroke="#d3abb3"/>
      </svg>
      <div class="viewbar">
        <button class="crumb"><svg width="4" height="8" viewBox="0 0 4 8"><path d="M0 0v8l4-4z"/></svg><svg class="pi" width="20" height="19" viewBox="0 0 20 19"><use href="#part" x="6" y="3" width="14" height="14"/><rect x="1" y="2" width="8" height="15" rx="2" fill="#333"/><circle cx="5" cy="6" r="2.300" fill="#a33"/><circle cx="5" cy="12.500" r="2.500" fill="#3b9a38"/><path d="M8 2h6v6H8z" fill="#f3c62e" stroke="#7b5b08"/></svg>Part2&nbsp; (Default&lt;&lt;Default&gt;...</button>
        <div class="hud">
          <button aria-label="Zoom to fit"><svg width="20" height="20" viewBox="0 0 20 20"><path d="M7 12l-5 6" stroke="#527590" stroke-width="3.500"/><circle cx="12" cy="8" r="6" fill="#eef3f8" stroke="#777" stroke-width="1.300"/><path d="M12 4l2 2h-4zM12 12l2-2h-4zM8 8l2-2v4zM16 8l-2-2v4z" fill="#555"/></svg></button>
          <button aria-label="Zoom to area"><svg width="20" height="20" viewBox="0 0 20 20"><path d="M6 2.500H3.500V5M14 1.500h4V5M18 10v4h-3" fill="none" stroke="#444" stroke-dasharray="2 1"/><path d="M6 13l-5 5" stroke="#7796ab" stroke-width="3.500"/><circle cx="10.500" cy="8.500" r="6" fill="#dfeaec" stroke="#888" stroke-width="1.300"/></svg></button>
          <button aria-label="Previous view"><svg width="20" height="20" viewBox="0 0 20 20"><path d="M2 13L13 2l4 1-8 14H3z" fill="#e3e3e3" stroke="#777"/><path d="M8 14l6-4v2h4v4h-4v3z" fill="#6ba2c4" stroke="#40789a"/></svg></button>
          <button aria-label="Section view"><svg width="20" height="20" viewBox="0 0 20 20"><path d="M1 5h6v12l-6 1zM13 4l6-2v13l-6 2z" fill="#3a7da5" stroke="#345"/><path d="M6 4c2-3 6-3 8 0v11c-2-3-6-3-8 0z" fill="#c7dae4" stroke="#567"/></svg></button>
          <button aria-label="Dynamic annotation"><svg width="20" height="20" viewBox="0 0 20 20"><path d="M7 2h8L8 11l5 0-11 8 4-8H2z" fill="#e9b987" stroke="#a66b3a"/><path d="M10 18l5-11 4 11M12 14h6" fill="none" stroke="#4484aa" stroke-width="1.600"/></svg></button>
          <button aria-label="View orientation"><svg width="20" height="20" viewBox="0 0 20 20"><path d="M1 7h12v12H1z" fill="#5ba2cc" stroke="#345"/><path d="M1 7l5-6h13l-6 6M19 1v12l-6 6M10 1v6M13 13l6-6" fill="none" stroke="#456"/></svg></button><button class="c" aria-label="Orientation options"><svg><use href="#caret"/></svg></button>
          <button aria-label="Display style"><svg width="18" height="20" viewBox="0 0 18 20"><path d="M1 4l7-3 8 2v12l-7 4-8-3z" fill="#b9dcef" stroke="#456"/><path d="M1 4l8 2v13l-8-3z" fill="#4e9bc8" stroke="#456"/><path d="M9 6l7-3" stroke="#456"/></svg></button><button class="c" aria-label="Display style options"><svg><use href="#caret"/></svg></button>
          <button aria-label="Hide or show items"><svg width="20" height="16" viewBox="0 0 20 16"><path d="M1 8c5-7 13-7 18 0-5 6-13 6-18 0z" fill="#ddd" stroke="#777"/><circle cx="10" cy="8" r="4" fill="#555"/><path d="M10 0v16" stroke="#999"/></svg></button><button class="c" aria-label="Visibility options"><svg><use href="#caret"/></svg></button>
          <button class="faint" aria-label="Edit appearance"><svg width="20" height="20" viewBox="0 0 20 20"><circle cx="8" cy="8" r="7" fill="#d0d0d0"/><path d="M9 13l9-7 2 4-8 8z" fill="#bbb"/></svg></button>
          <button aria-label="Apply scene"><svg width="20" height="20" viewBox="0 0 20 20"><path d="M1 8h18v11H1z" fill="#eee" stroke="#333"/><path d="M1 12h3v3H1zM7 15h3v4H7zM13 15h3v4h-3zM16 10h3v4h-3z" fill="#333"/><use href="#ball" x="3" y="0" width="15" height="15"/></svg></button><button class="c" aria-label="Scene options"><svg><use href="#caret"/></svg></button>
          <button aria-label="View settings"><svg width="20" height="18" viewBox="0 0 20 18"><path d="M1 1.500h18v11H1z" fill="#bfc5cc" stroke="#555" stroke-width="1.400"/><path d="M10 13v3M6 16.500h8" stroke="#555" stroke-width="1.500"/></svg></button><button class="c" aria-label="View settings options"><svg><use href="#caret"/></svg></button>
        </div>
      </div>
      <button class="flyout" aria-label="Collapse panel"><i></i></button>
      <div class="orient">*Bottom</div>
      <nav class="taskpane">
        <button aria-label="Resources"><svg width="20" height="20"><use href="#house"/></svg></button>
        <button aria-label="Design library"><svg width="20" height="20" viewBox="0 0 20 20"><path d="M2 4l4-2 4 1 4-1 4 1v13l-5 3-4-1-3 1-4-2zM2 4l4 2v13M6 6l4-3M6 6l4 1v12M10 7l4-3M10 7l3 1v11M13 8l5-5" fill="#f2f2f2" stroke="#333" stroke-width="1.200"/></svg></button>
        <button aria-label="File explorer"><svg width="22" height="20" viewBox="0 0 22 20"><path d="M1 18V2h6l2 3h10v3" fill="#ddd" stroke="#333" stroke-width="1.200"/><path d="M1 18L7 8h15l-5 10z" fill="#fff" stroke="#333" stroke-width="1.200"/></svg></button>
        <button aria-label="View palette"><svg width="20" height="20" viewBox="0 0 20 20"><path d="M2 2h11v5H2zM15 2h4v5h-4zM5 9h6v4h3v5H2v-5h3z" fill="#f2c52d" stroke="#333" stroke-width="1.300"/><path d="M16 18v-8h4" fill="none" stroke="#333" stroke-width="1.300"/></svg></button>
        <button class="active" aria-label="Appearances"><svg width="19" height="19"><use href="#ball"/></svg></button>
        <button aria-label="Custom properties"><svg width="20" height="20"><use href="#list"/></svg></button>
        <button aria-label="Updates"><svg width="20" height="20" viewBox="0 0 20 20"><circle cx="10" cy="10" r="7" fill="#4c9bd0"/><path d="M2 8c2-7 11-8 15-3l2-2v6h-6l2-2C12 4 7 4 5 8zM18 12c-2 7-11 8-15 3l-2 2v-6h6l-2 2c3 3 8 3 10-1z" fill="#fff" stroke="#24506d"/></svg></button>
        <button aria-label="Forum"><svg width="20" height="20" viewBox="0 0 20 20"><path d="M1 2h13v9H7l-3 4v-4H1z" fill="#3a87ad" stroke="#24506d"/><path d="M9 8h11v8h-2v4l-4-4H9z" fill="#fff" stroke="#333" stroke-width="1.200"/></svg></button>
      </nav>
    </section>
  </div>
</main>

<div class="bottomtabs">
  <div class="vcr"><button aria-label="First tab"><svg width="8" height="9" viewBox="0 0 8 9"><path d="M1 0v9M7 0v9L2.500 4.500z" fill="#888" stroke="#888"/></svg></button><button aria-label="Previous tab"><svg width="8" height="9" viewBox="0 0 8 9"><path d="M6 0v9L1.500 4.500z" fill="#888"/></svg></button><button aria-label="Next tab"><svg width="8" height="9" viewBox="0 0 8 9"><path d="M2 0v9l4.500-4.500z" fill="#888"/></svg></button><button aria-label="Last tab"><svg width="8" height="9" viewBox="0 0 8 9"><path d="M7 0v9M1 0v9l4.500-4.500z" fill="#888" stroke="#888"/></svg></button></div>
  <button class="active">Model</button><button>3D Views</button><button>Motion Study 1</button>
</div>
<footer class="status">
  <span class="msg">Set the properties of the selected dimension(s).</span>
  <span class="cell">Fully Defined</span><span class="cell edit">Editing Sketch5</span>
  <span class="cell lamp"><svg width="8" height="13"><use href="#light"/></svg></span>
  <button class="units">MMGS<svg width="5" height="3" viewBox="0 0 7 4"><path d="M0 4h7L3.500 0z" fill="#333"/></svg></button>
  <button class="tag" aria-label="Tags"><svg width="16" height="14" viewBox="0 0 16 14"><path d="M1 4l5-3 9 7-5 5-8-5z" fill="#fff" stroke="#444"/><circle cx="5" cy="5" r="1.500" fill="none" stroke="#444"/><path d="M8 7l3 2M2 8l8 5" stroke="#444"/></svg></button>
</footer>
</body>
</html>
```
FILE: styles.css
```css
* { box-sizing: border-box; }
body { margin: 0; height: 100vh; display: flex; flex-direction: column; overflow: hidden; background: #f7f7f7; color: #111; font: 11px/13px "Noto Sans", "Open Sans", sans-serif; }
button { margin: 0; padding: 0; border: 0; background: none; color: inherit; font: inherit; display: flex; align-items: center; justify-content: center; white-space: nowrap; }
input, select, textarea { font: inherit; color: inherit; margin: 0; border-radius: 0; }
svg { display: block; flex: none; }
h2, h3 { margin: 0; font-size: 11px; font-weight: 600; }
.sprite { position: absolute; width: 0; height: 0; }
.c { width: 14px; flex: none; }
.c svg, .drop svg { width: 6px; height: 4px; }

.titlebar { position: relative; flex: none; display: flex; align-items: center; height: 31px; border-bottom: 1px solid #8a8a8a; }
.logo { position: absolute; z-index: 2; left: 10px; top: 0; width: 145px; height: 35px; display: flex; align-items: center; gap: 4px; padding-left: 5px; border: 1px solid #a2a2a2; border-top: 0; background: linear-gradient(100deg, #fff 40%, #dcdcdc); }
.mark { width: 30px; height: 30px; }
.wordmark { margin-top: 4px; font: italic 14px/18px "Liberation Sans", sans-serif; color: #c4382f; }
.wordmark b { font-size: 15px; }
.menuside { flex: 0 0 608px; align-self: stretch; display: flex; align-items: center; justify-content: space-between; padding: 0 8px 0 183px; border-right: 1px solid #8a8a8a; }
.menus { display: flex; gap: 16px; }
.quick { flex: none; display: flex; align-items: center; padding-left: 14px; }
.q { width: 25px; }
.q.wide { width: 26px; }
.doc { padding-left: 7px; }
.search { display: flex; flex: 0 1 202px; min-width: 0; margin-left: auto; align-items: center; gap: 6px; height: 23px; padding: 0 0 0 5px; border: 1px solid #111; background: #f0f0f5; }
.search input { flex: 1; width: 0; min-width: 0; padding: 0; border: 0; background: none; outline: 0; }
.search input::placeholder { color: #666; opacity: 1; }
.search .c { margin-left: -6px; }
.winctl { flex: none; display: flex; align-items: center; padding-left: 8px; color: #444; }
.w1 { width: 20px; }
.help { width: 26px; font-size: 18px; font-weight: 700; }
.w2 { width: 25px; }

.ribbon { flex: none; display: flex; height: 87px; padding: 6px 0 3px 6px; border-bottom: 1px solid #8a8a8a; }
.split, .tool { flex: none; display: flex; flex-direction: column; }
.split button:first-child, .tool button:first-child { flex: 1; flex-direction: column; justify-content: flex-start; padding-top: 4px; text-align: center; }
.tool.low button:first-child { padding-top: 11px; }
.drop { height: 19px; flex: none; }
.split { border: 1px solid #8a8a8a; background: #f7f7f7; }
.split button:first-child { background: #b3b3b3; border-bottom: 1px solid #999; }
.exit { width: 45px; }
.smart { width: 65px; margin-left: -1px; }
.sketchtools { display: grid; grid-template-columns: 26px 14px 26px 14px 26px 14px 26px; grid-template-rows: repeat(3, 26px); padding-left: 3px; width: 151px; border-right: 1px solid #ccc; }
.s { width: 26px; }
.trim { width: 50px; }
.conv { width: 48px; }
.offs { width: 49px; }
.surf { width: 47px; }
.surf button { color: #b8b8b8; }
.rows { width: 176px; display: flex; flex-direction: column; border-right: 1px solid #ccc; }
.row { display: flex; height: 26px; align-items: center; justify-content: space-between; padding-right: 1px; }
.row button:first-child { gap: 7px; padding-left: 4px; }
.disp { width: 87px; }
.repair { width: 44px; border-right: 1px solid #ccc; }
.snaps { width: 44px; border-right: 1px solid #ccc; }
.rapid { width: 46px; }
.on { color: #111; }
.tool.on { border: 1px solid #777; background: #b3b3b3; }
.inst { width: 60px; }
.shade { width: 59px; margin-left: -1px; }

.work { flex: 1; min-height: 0; display: flex; flex-direction: column; border-bottom: 1px solid #8a8a8a; background: radial-gradient(ellipse 48% 62% at 32% 8%, #fff 35%, #fff0), linear-gradient(#eff0f6 0%, #e1e3ed 38%, #e4e6ef 54%, #fafafd 70%, #fff 85%, #f6f6fa 100%); }
.tabline { flex: none; display: flex; height: 22px; }
.cmdtabs { display: flex; }
.cmdtabs button { padding: 0 8px; color: #333; background: #d2d2d2; border: 1px solid #8c8c8c; border-top: 0; border-left: 0; }
.cmdtabs button:nth-child(n+6) { padding-right: 9px; }
.cmdtabs .active { background: #f7f7f7; border-bottom-color: #f7f7f7; font-weight: 700; }
.docctl { margin-left: auto; display: flex; color: #888; padding: 8px 3px 0 0; }
.docctl button { width: 26px; height: 14px; }
.split-area { flex: 1; min-height: 0; display: flex; }
.panel { flex: 0 0 230px; min-width: 0; display: flex; flex-direction: column; padding-right: 2px; background: #f7f7f7; border-right: 1px solid #8a8a8a; }
.grip { flex: none; height: 16px; margin-top: 4px; display: flex; align-items: center; justify-content: center; border: solid #aaa; border-width: 1px 0; }
.grip i, .flyout i { width: 6px; height: 6px; border: 1px solid #888; border-radius: 50%; background: #ddd; }
.icontabs { flex: none; position: relative; display: flex; height: 26px; margin: 4px 0 0 2px; border-top: 1px solid #8a8a8a; }
.icontabs > button { flex: none; width: 40px; border: 1px solid #999; border-width: 0 1px 1px 0; background: #d2d2d2; }
.icontabs > .active { background: #f7f7f7; border-bottom-color: #f7f7f7; }
.icontabs > .last { flex: 1; justify-content: flex-start; padding-left: 10px; }
.tabscroll { position: absolute; right: 0; bottom: 0; display: flex; height: 19px; }
.tabscroll button { width: 18px; border: 1px solid #999; border-right: 0; background: #f9f9f9; }
.phead { flex: none; display: flex; align-items: center; height: 32px; padding: 0 12px 0 8px; gap: 6px; }
.phead h2 { flex: 1; font-weight: 700; }
.ok { flex: none; height: 22px; width: 30px; }
.ptabs { flex: none; display: flex; height: 25px; margin: 12px 0 0 2px; border-bottom: 1px solid #999; }
.ptabs button { height: 25px; padding: 0 6px; border: 1px solid #999; border-left: 0; background: #d2d2d2; color: #444; }
.ptabs .active { background: #f7f7f7; border-bottom-color: #f7f7f7; }
.scrollwrap { flex: 1; min-height: 0; display: flex; margin-top: 18px; padding-bottom: 3px; }
.props { flex: 1; min-width: 0; overflow: hidden; padding-left: 5px; }
.props section { border-bottom: 1px solid #999; margin-right: 4px; padding: 6px 0 10px; color: #111; }
.props section + section { padding-top: 7px; }
.props section:last-child { border: 0; }
h3 { display: flex; align-items: center; justify-content: space-between; padding: 0 3px 0 4px; color: #444; }
.stylebtns { display: flex; margin: 7px 0 5px 34px; }
.stylebtns button { width: 25px; height: 24px; margin-right: -1px; border: 1px solid #a0968c; background: #fff; }
.field { display: flex; align-items: stretch; height: 21px; margin: 0 5px 0 39px; }
h3 + .field { margin-top: 9px; }
.field.second { margin-top: 11px; }
.primary h3 + .field { margin-top: 7px; height: 20px; }
.field.third { margin-top: 8px; height: 24px; }
.third input { padding-bottom: 3px; }
.sel { position: relative; flex: 1; min-width: 0; display: flex; }
.sel select { flex: 1; min-width: 0; appearance: none; padding: 0 3px; border: 1px solid #a5a5a5; background: #e1e1e1; }
.sel svg { position: absolute; right: 4px; top: 7px; pointer-events: none; }
.tolicon { flex: none; width: 34px; height: 24px; margin: -2px 5px 0 -39px; padding: 0 10px 0 1px; display: flex; flex-direction: column; align-items: flex-end; font: 7px/8px "Liberation Sans", sans-serif; }
.tolicon .m { align-self: flex-start; }
.tolicon .b { color: #2f76a2; }
.field input { flex: 1; width: 0; min-width: 0; padding: 0 5px; border: 1px solid #777; background: #fff; }
.spin { flex: none; width: 17px; margin-left: 4px; display: flex; flex-direction: column; }
.spin button { flex: 1; background: #efefef; }
.textrow { display: flex; gap: 3px; margin: 7px 0 0 4px; }
.stack { display: flex; flex-direction: column; gap: 3px; }
.k { flex: none; width: 24px; height: 24px; border: 1px solid #999; background: #fff; }
.xx { color: #234f6c; font-weight: 600; font-size: 10px; }
.pill { width: 20px; height: 12px; line-height: 7px; color: #222; border: 2px solid #2d6f8d; border-radius: 6px; }
.textrow textarea { flex: 1; width: 0; min-width: 0; margin-right: 1px; padding: 0 1px; border: 1px solid #999; resize: none; overflow: hidden; background: #fff; }
.krow { display: flex; gap: 2px; margin: 8px 0 0 4px; }
.krow.near { margin-top: 3px; }
.sel-on { background: #b9b9b9; border-color: #777; }
.scrollbar { flex: none; width: 15px; margin-right: 3px; display: flex; flex-direction: column; background: #f0f0f0; }
.scrollbar button { height: 15px; }
.scrollbar .thumb { flex: 0 0 76%; background: #cdcdcd; }
.scrollbar button:last-child { margin-top: auto; }

.view { position: relative; flex: 1; min-width: 0; }
.scene { position: absolute; inset: 0; width: 100%; height: 100%; }
.wm { font: 43px "Liberation Mono", monospace; fill: #fff; fill-opacity: .72; }
.cjk { font: 300 50px "Noto Sans CJK SC", sans-serif; }
.viewbar { position: relative; display: flex; height: 31px; align-items: center; padding-left: 5px; }
.crumb { flex: none; width: 382px; justify-content: flex-start; }
.pi { margin: 0 4px 0 11px; }
.hud { display: flex; align-items: center; }
.hud button:not(.c) { width: 26px; height: 24px; }
.hud .c { opacity: .6; }
.hud .faint { opacity: .6; }
.flyout { position: absolute; left: -1px; top: 265px; width: 9px; height: 39px; border: 1px solid #8a8a8a; border-left: 0; background: #f7f7f7; }
.orient { position: absolute; left: 11px; bottom: 2px; font-weight: 700; }
.taskpane { position: absolute; right: 0; top: 29px; width: 22px; overflow: hidden; border: 1px solid #888; border-right: 0; }
.taskpane button { width: 24px; height: 24px; background: #d4d4d4; border-bottom: 1px solid #888; }
.taskpane button:last-child { height: 23px; border-bottom: 0; }
.taskpane .active { background: #fff; }

.bottomtabs { flex: none; display: flex; height: 16px; border-bottom: 1px solid #8a8a8a; padding-left: 2px; }
.vcr { width: 65px; display: flex; background: #aaa; }
.vcr button { flex: 1; border: 1px solid #8c8c8c; border-left: 0; }
.bottomtabs > button { padding: 0 10px; background: #d2d2d2; color: #333; border: solid #8c8c8c; border-width: 0 1px 0 0; }
.bottomtabs > .active { padding: 0 9px 0 12px; background: #fff; color: #000; font-weight: 700; }
.bottomtabs > button:last-child { padding-right: 18px; }
.status { flex: none; display: flex; align-items: center; height: 16px; padding: 2px 0 0 1px; }
.msg { flex: 1; }
.cell { padding: 0 4px 0 6px; border-right: 1px solid #ccc; }
.edit { margin-left: 6px; border-left: 1px solid #ccc; padding: 0 5px; }
.lamp { padding: 0 9px 0 18px; }
.units { width: 62px; margin-left: 32px; justify-content: space-between; }
.tag { margin-left: 64px; }
```
